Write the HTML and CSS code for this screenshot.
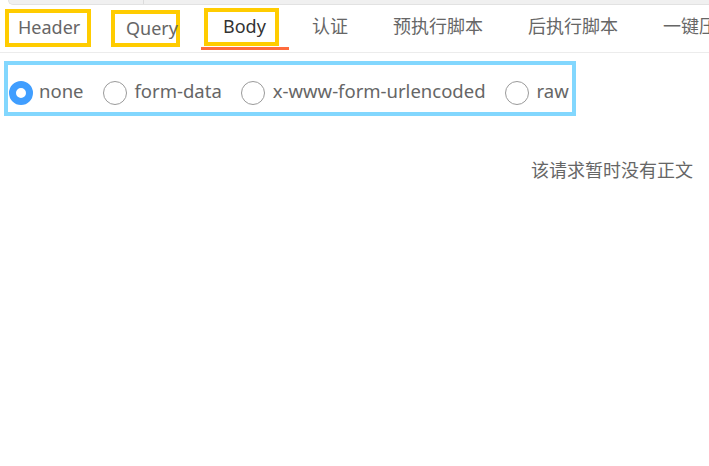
FILE: index.html
```html
<!DOCTYPE html>
<html lang="zh-CN">
<head>
<meta charset="utf-8">
<title>Body</title>
<link rel="stylesheet" href="styles.css">
</head>
<body>
<div class="page">
  <div class="toolbar-edge"><span class="toolbar-divider"></span></div>
  <nav class="tabs">
    <div class="tab tab-header"><span class="mark mark-header">Header</span></div>
    <div class="tab tab-query"><span class="mark mark-query">Query</span></div>
    <div class="tab tab-body active"><span class="mark mark-body">Body</span></div>
    <div class="tab plain">认证</div>
    <div class="tab plain">预执行脚本</div>
    <div class="tab plain">后执行脚本</div>
    <div class="tab plain">一键压测</div>
  </nav>
  <div class="radio-group">
    <label class="radio checked"><span class="dot"></span><span class="label">none</span></label>
    <label class="radio"><span class="dot"></span><span class="label">form-data</span></label>
    <label class="radio"><span class="dot"></span><span class="label">x-www-form-urlencoded</span></label>
    <label class="radio"><span class="dot"></span><span class="label">raw</span></label>
  </div>
  <p class="empty">该请求暂时没有正文</p>
</div>
</body>
</html>
```
FILE: styles.css
```css
* { box-sizing: border-box; }
html, body { margin: 0; padding: 0; background: #fff; }
body {
  font-family: "Noto Sans", "Noto Sans CJK SC", sans-serif;
  color: #666;
  width: 709px;
  height: 466px;
  overflow: hidden;
}
.page { position: relative; }

.toolbar-edge {
  position: relative;
  height: 5px;
  margin-left: 8px;
  background: #f0f0f0;
  border-left: 1px solid #e2e2e2;
  border-bottom: 1px solid #e2e2e2;
  border-bottom-left-radius: 6px;
}
.toolbar-divider {
  position: absolute;
  left: 134px;
  top: 0;
  width: 1px;
  height: 4px;
  background: #dcdcdc;
}

.tabs {
  display: flex;
  align-items: flex-start;
  height: 48px;
  border-bottom: 1px solid #ececec;
  font-size: 18px;
  white-space: nowrap;
  overflow: hidden;
}
.tab { flex: none; color: #666; }
.mark {
  display: flex;
  align-items: center;
  border: 4px solid #ffcc00;
  line-height: 1;
  padding-bottom: 2px;
}
.tab-header { margin-left: 5px; margin-top: 4px; }
.mark-header { width: 86px; height: 38px; padding-left: 9px; }
.tab-query { margin-left: 20px; margin-top: 5px; }
.mark-query { width: 69px; height: 37px; padding-left: 11px; }
.tab-body {
  margin-left: 21px;
  width: 88px;
  height: 45px;
  padding-top: 3px;
  padding-left: 3px;
  border-bottom: 3px solid #ff6b3d;
}
.mark-body { width: 75px; height: 38px; padding-left: 15px; color: #333; }
.plain {
  padding: 0 22.5px 3px;
  height: 45px;
  display: flex;
  align-items: center;
  line-height: 1;
}
.tab-body + .plain { padding-left: 23px; }

.radio-group {
  display: flex;
  align-items: center;
  width: 572px;
  height: 55px;
  margin: 8px 0 0 4px;
  padding: 8px 0 0 1px;
  border: 4px solid #82d7fe;
  font-size: 18.5px;
  white-space: nowrap;
}
.radio {
  flex: none;
  display: flex;
  align-items: center;
  margin-right: 19px;
  color: #666;
}
.dot {
  flex: none;
  width: 24px;
  height: 24px;
  border-radius: 50%;
  border: 1px solid #9a9a9a;
  background: #fff;
  margin-right: 8px;
}
.radio.checked .dot {
  border: 7px solid #409eff;
  margin-right: 6px;
}
.label { line-height: 1; padding-bottom: 2px; }

.empty {
  margin: 40px 0 0;
  padding-right: 16px;
  text-align: right;
  font-size: 18px;
  color: #666;
}
```
